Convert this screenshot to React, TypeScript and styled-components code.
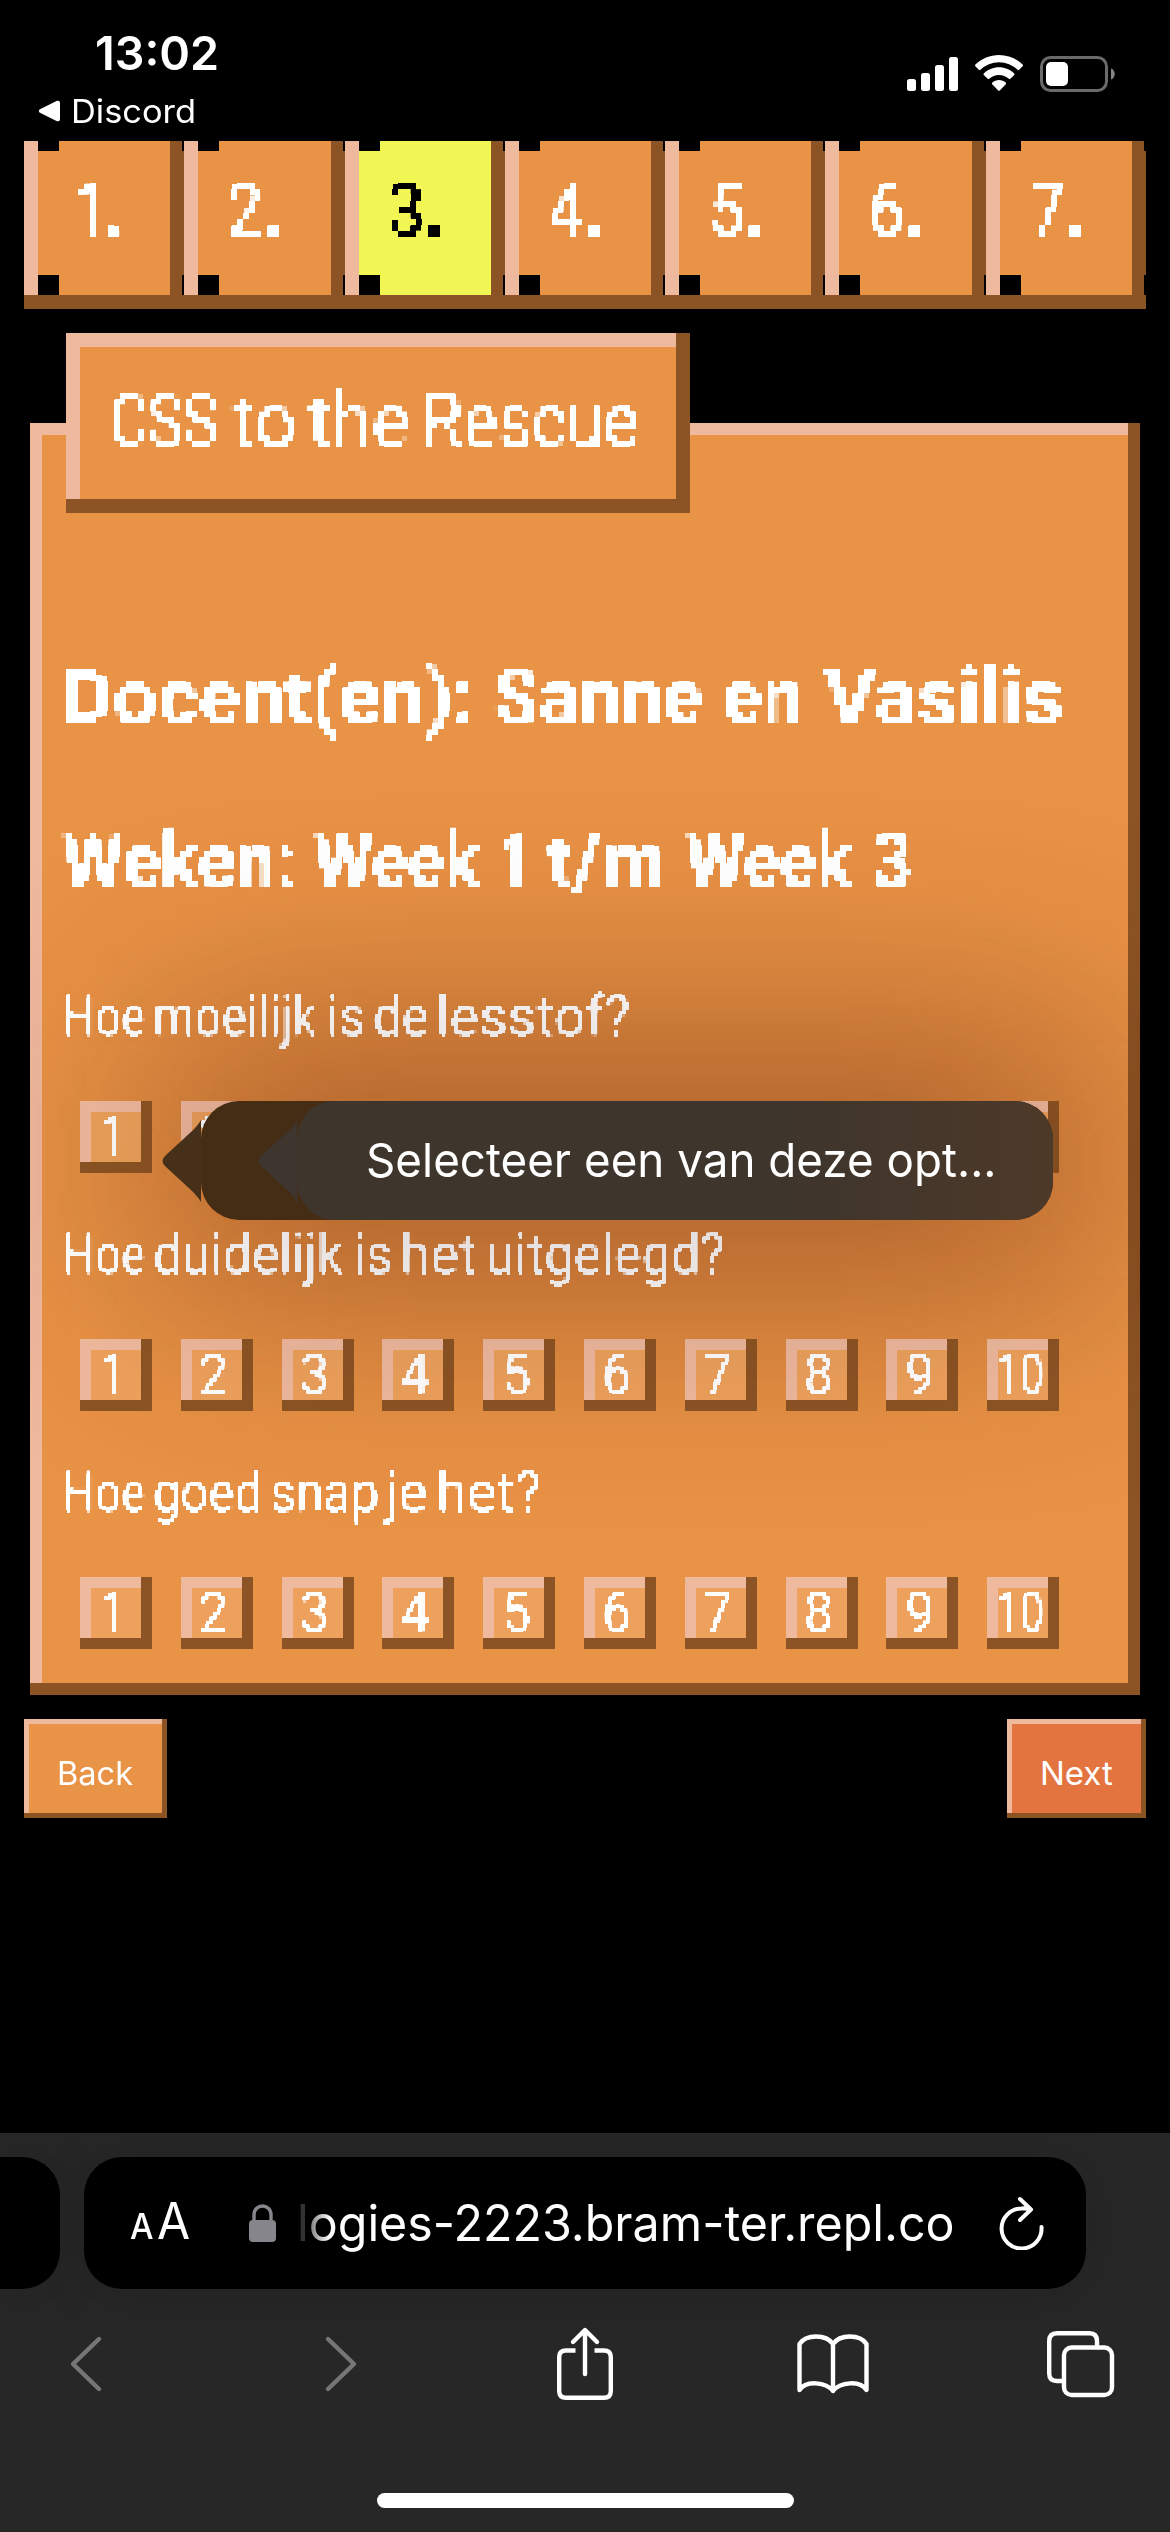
import React, { useLayoutEffect, useRef, useState } from 'react';
import styled, { createGlobalStyle, css } from 'styled-components';

const c = {
  base: '#e99346',
  light: '#efb99e',
  dark: '#8c5424',
  yellow: '#f2f654',
  hot: '#e37440',
};

const GlobalStyle = createGlobalStyle`
  * { box-sizing: border-box; }
  html, body { margin: 0; background: #000; }
  body { width: 1170px; height: 2532px; overflow: hidden; font-family: Inter, "Liberation Sans", sans-serif; color: #fff; }
  h1, h2, p { margin: 0; font-weight: inherit; font-size: inherit; }
  button { border: 0; color: inherit; font: inherit; padding: 0; }
`;

const bevel = (w: number) => css`
  box-shadow:
    inset -${w}px 0 ${c.dark},
    inset 0 -${w}px ${c.dark},
    inset ${w}px 0 ${c.light},
    inset 0 ${w}px ${c.light};
`;

const Page = styled.div`
  width: 1170px;
  height: 2532px;
  display: flex;
  flex-direction: column;
  background: #000;
  overflow: hidden;
`;

/* ---------- fitted text ---------- */

const Slot = styled.span<{ $w: number }>`
  display: inline-block;
  width: ${(p) => p.$w}px;
  white-space: pre;
`;

const Stretch = styled.span`
  display: inline-block;
  transform-origin: 0 50%;
`;

type FitProps = { text: string; width: number; pitch?: number; bleed?: number };

/* Scales a text to an exact width; bleed is the side bearing that hangs out on the left. */
function Fit({ text, width, pitch = width, bleed = 0 }: FitProps) {
  const ref = useRef<HTMLSpanElement>(null);
  const [scale, setScale] = useState(1);
  useLayoutEffect(() => {
    const measure = () => {
      if (ref.current) setScale((width + bleed) / ref.current.offsetWidth);
    };
    measure();
    document.fonts.ready.then(measure);
  }, [text, width, bleed]);
  return (
    <Slot $w={pitch}>
      <Stretch ref={ref} style={{ transform: `translateX(${-bleed}px) scaleX(${scale})` }}>{text}</Stretch>
      {pitch > width ? ' ' : ''}
    </Slot>
  );
}

type Word = [text: string, start: number, end: number];

function Words({ words, bleed = 4 }: { words: Word[]; bleed?: number }) {
  return (
    <>
      {words.map(([t, s, e], i) => (
        <Fit key={i} text={t} width={e - s + 1} bleed={bleed} pitch={i < words.length - 1 ? words[i + 1][1] - s : e - s} />
      ))}
    </>
  );
}

/* ---------- pixel lettering ---------- */

const pixelFont = css`
  font-family: Roboto, "Liberation Sans", sans-serif;
  white-space: nowrap;
`;

const Defs = styled.svg`
  position: absolute;
  width: 0;
  height: 0;
`;

function PixelFilter({ id, cell, dot, blur, slope = 12, cut = 5 }: { id: string; cell: number; dot: number; blur: number; slope?: number; cut?: number }) {
  const r = (cell - dot) / 2;
  return (
    <filter id={id} primitiveUnits="userSpaceOnUse" colorInterpolationFilters="sRGB">
      <feGaussianBlur in="SourceGraphic" stdDeviation={blur} result="soft" />
      <feFlood x={r} y={r} width={dot} height={dot} floodColor="#000" result="dot" />
      <feOffset in="dot" x={0} y={0} width={cell} height={cell} dx={0} dy={0} />
      <feTile result="grid" />
      <feComposite in="soft" in2="grid" operator="in" />
      <feMorphology operator="dilate" radius={r} />
      <feComponentTransfer>
        <feFuncA type="linear" slope={slope} intercept={-cut} />
      </feComponentTransfer>
    </filter>
  );
}

/* ---------- status bar ---------- */

const Status = styled.header`
  height: 141px;
  display: flex;
  justify-content: space-between;
  padding: 0 54px 0 38px;
`;

const StatusLeft = styled.div`
  display: flex;
  flex-direction: column;
  padding-top: 24px;
`;

const Clock = styled.div`
  margin-left: 57px;
  height: 57px;
  line-height: 57px;
  font-size: 47px;
  font-weight: 600;
`;

const BackApp = styled.div`
  display: flex;
  align-items: center;
  gap: 11px;
  height: 60px;
  line-height: 60px;
  font-size: 33px;
`;

const StatusIcons = styled.div`
  display: flex;
  gap: 17px;
  padding-top: 55px;
  height: 93px;
`;

/* ---------- tabs ---------- */

const Tabs = styled.nav`
  display: grid;
  grid-template-columns: repeat(7, minmax(0, 1fr));
  height: 168px;
  margin: 0 24px;
  border-bottom: 14px solid ${c.dark};
`;

const Tab = styled.div<{ $active?: boolean; $first?: boolean }>`
  height: 154px;
  padding: 12px 0 0 ${(p) => (p.$first ? 54 : 47)}px;
  line-height: 114px;
  font-size: 76px;
  color: ${(p) => (p.$active ? '#000' : '#fff')};
  background:
    linear-gradient(#000, #000) 14px 0 / 21px 10px no-repeat,
    linear-gradient(#000, #000) 14px 100% / 21px 20px no-repeat,
    linear-gradient(#000, #000) 100% 0 / 2px 10px no-repeat,
    linear-gradient(#000, #000) 100% 100% / 2px 20px no-repeat,
    linear-gradient(${c.light}, ${c.light}) 0 0 / 14px 100% no-repeat,
    linear-gradient(${c.dark}, ${c.dark}) 100% 0 / 14px 100% no-repeat,
    ${(p) => (p.$active ? c.yellow : c.base)};
  ${pixelFont}
`;

const TabLabel = styled.div`
  display: flex;
  height: 114px;
  filter: url(#pixel6);
`;

const Period = styled.b`
  margin-left: 1px;
`;

/* ---------- panel ---------- */

const Panel = styled.main`
  position: relative;
  isolation: isolate;
  margin: 114px 30px 0;
  height: 1272px;
  padding-left: 36px;
  background: ${c.base};
  ${bevel(12)}
`;

const Title = styled.h1`
  width: 624px;
  height: 180px;
  margin-top: -90px;
  padding: 42px 0 0 48px;
  background: ${c.base};
  ${bevel(14)}
`;

const TitleText = styled.div`
  height: 90px;
  line-height: 92px;
  font-size: 76px;
  ${pixelFont}
  filter: url(#pixel6thin);
`;

const Heading = styled.h2<{ $gap: number }>`
  margin-top: ${(p) => p.$gap}px;
  height: 90px;
  line-height: 92px;
  font-size: 76px;
  font-weight: 700;
  ${pixelFont}
  filter: url(#pixel6);
`;

const Questions = styled.div`
  display: flex;
  flex-direction: column;
  gap: 51px;
  margin-top: 81px;
`;

const Question = styled.section`
  display: flex;
  flex-direction: column;
  gap: 55px;
`;

const Prompt = styled.p`
  height: 60px;
  line-height: 60px;
  font-size: 58px;
  ${pixelFont}
  filter: url(#pixel4);
`;

const Ratings = styled.div`
  position: relative;
  display: flex;
  gap: 28.8px;
  margin-left: 14px;
`;

const Rating = styled.button`
  flex: none;
  width: 72px;
  height: 72px;
  padding-right: 4px;
  line-height: 66px;
  font-size: 57px;
  text-align: center;
  background: #eda15c;
  ${bevel(11)}
  ${pixelFont}
`;

const RatingLabel = styled.span`
  display: flex;
  justify-content: center;
  height: 66px;
  filter: url(#pixel4);
`;

/* ---------- validation bubble ---------- */

const GlowClip = styled.div<{ $front?: boolean }>`
  position: absolute;
  inset: 0;
  overflow: hidden;
  z-index: ${(p) => (p.$front ? 1 : -1)};
  pointer-events: none;
`;

const Glow = styled.div<{ $front?: boolean }>`
  position: absolute;
  left: 131px;
  top: 618px;
  width: 932px;
  height: 239px;
  filter: blur(115px);
  background: ${(p) => (p.$front ? 'rgba(50, 10, 0, 0.2)' : 'rgba(100, 25, 0, 0.28)')};
`;

const Bubble = styled.div`
  position: absolute;
  z-index: 2;
  left: 171px;
  top: 678px;
  width: 852px;
  height: 119px;
  border-radius: 38px;
  background: #452c14;
`;

const BubbleFace = styled.div`
  margin-left: 96px;
  height: 119px;
  padding-left: 69px;
  border-radius: 38px;
  line-height: 117px;
  font-size: 47px;
  background: linear-gradient(90deg, #3e352d 65%, #4d3928);
`;

const Arrow = styled.svg<{ $x: number }>`
  position: absolute;
  left: ${(p) => p.$x}px;
  top: 19px;
`;

const ArrowShape = ({ x, fill }: { x: number; fill: string }) => (
  <Arrow $x={x} width="40" height="82" viewBox="0 0 40 82">
    <path d="M39 0 V82 C36 77 33 74 29 70 L4 47 Q-3 41 4 35 L29 12 C33 8 36 5 39 0Z" fill={fill} />
  </Arrow>
);

/* ---------- footer buttons ---------- */

const Actions = styled.div`
  display: flex;
  justify-content: space-between;
  margin: 24px 24px 0;
`;

const Action = styled.button<{ $w: number; $hot?: boolean }>`
  width: ${(p) => p.$w}px;
  height: 99px;
  padding: 9px 0 0 33px;
  text-align: left;
  font-size: 33px;
  line-height: 90px;
  background: ${(p) => (p.$hot ? c.hot : c.base)};
  ${bevel(5)}
`;

/* ---------- browser chrome ---------- */

const Browser = styled.footer`
  margin-top: auto;
  height: 399px;
  background: #272727;
  display: flex;
  flex-direction: column;
  padding-top: 24px;
`;

const UrlRow = styled.div`
  display: flex;
  gap: 24px;
  height: 132px;
`;

const PrevTab = styled.div`
  width: 60px;
  background: #000;
  border-radius: 0 38px 38px 0;
  box-shadow: 0 4px 50px rgba(0, 0, 0, 0.15);
`;

const UrlBar = styled.div`
  width: 1002px;
  display: flex;
  align-items: center;
  padding-left: 46px;
  background: #000;
  border-radius: 38px;
  box-shadow: 0 4px 50px rgba(0, 0, 0, 0.15);
`;

const TextSize = styled.div`
  display: flex;
  align-items: baseline;
  gap: 3px;
  width: 119px;
  line-height: 132px;
  font-size: 51px;
`;

const SmallA = styled.span`
  font-size: 36px;
  font-weight: 500;
`;

const Url = styled.div`
  display: flex;
  width: 662px;
  margin: 0 45px 0 16px;
  padding-left: 5px;
  line-height: 132px;
  font-size: 50px;
  white-space: nowrap;
  mask-image: linear-gradient(90deg, rgba(0, 0, 0, 0.2) 14px, rgba(0, 0, 0, 0.55) 20px, #000 38px);
`;

const Tools = styled.div`
  display: grid;
  grid-template-columns: repeat(5, 248px);
  place-items: center;
  height: 80px;
  margin: 35px 0 0 -35px;
`;

const Tool = styled.svg<{ $dx?: number; $dim?: boolean }>`
  margin-left: ${(p) => (p.$dx ?? 0) * 2}px;
  fill: none;
  stroke: ${(p) => (p.$dim ? '#767676' : '#fff')};
  stroke-width: 4.4;
  stroke-linecap: round;
  stroke-linejoin: round;
`;

const HomeIndicator = styled.div`
  width: 417px;
  height: 15px;
  border-radius: 8px;
  background: #fff;
  margin: 89px 0 0 377px;
`;

const QUESTIONS: Word[][] = [
  [['Hoe', 66, 144], ['moeilijk', 156, 315], ['is', 330, 364], ['de', 376, 427], ['lesstof?', 439, 630]],
  [['Hoe', 66, 144], ['duidelijk', 156, 342], ['is', 357, 391], ['het', 403, 476], ['uitgelegd?', 489, 724]],
  [['Hoe', 66, 144], ['goed', 156, 261], ['snap', 273, 378], ['je', 388, 427], ['het?', 439, 540]],
];

const NUMBERS = [1, 2, 3, 4, 5, 6, 7, 8, 9, 10];

export default function App() {
  return (
    <Page>
      <GlobalStyle />
      <Defs aria-hidden="true">
        <PixelFilter id="pixel6" cell={6} dot={2} blur={1.1} />
        <PixelFilter id="pixel6thin" cell={6} dot={2} blur={1.4} cut={5.6} />
        <PixelFilter id="pixel4" cell={4} dot={2} blur={0.9} cut={6.2} />
      </Defs>

      <Status>
        <StatusLeft>
          <Clock><Fit text="13:02" width={124} /></Clock>
          <BackApp>
            <svg width="22" height="22" viewBox="0 0 22 22"><path d="M1.5 9.5 19 .8Q22 0 22 3V19Q22 22 19 21.200L1.500 12.500Q0 11 1.500 9.500Z" fill="#fff" /></svg>
            <Fit text="Discord" width={125} />
          </BackApp>
        </StatusLeft>
        <StatusIcons>
          <svg width="51" height="36" viewBox="0 0 51 36" fill="#fff">
            <rect x="0" y="24" width="9" height="12" rx="2.500" />
            <rect x="14" y="18" width="9" height="18" rx="2.500" />
            <rect x="28" y="10" width="9" height="26" rx="2.500" />
            <rect x="42" y="2" width="9" height="34" rx="2.500" />
          </svg>
          <svg width="48" height="36" viewBox="0 0 48 36" fill="#fff">
            <path d="M24 0C33 0 41.500 3.600 47.600 9.600Q48.400 10.400 47.600 11.200L44.200 14.800Q43.400 15.500 42.600 14.800A26.500 26.500 0 0 0 5.400 14.800Q4.600 15.500 3.800 14.800L.4 11.200Q-.4 10.400 .4 9.600C6.500 3.600 15 0 24 0Z" />
            <path d="M24 12.300C29.800 12.300 35.200 14.600 39.200 18.400Q40 19.200 39.200 20L35.400 23.800Q34.600 24.500 33.800 23.800A14.500 14.500 0 0 0 14.200 23.800Q13.400 24.500 12.600 23.800L8.800 20Q8 19.200 8.800 18.400C12.800 14.600 18.200 12.300 24 12.300Z" />
            <path d="M24 25C26.600 25 29 26 30.700 27.600Q31.400 28.400 30.700 29.200L24.800 35.400Q24 36 23.200 35.400L17.300 29.200Q16.600 28.400 17.300 27.600C19 26 21.400 25 24 25Z" />
          </svg>
          <svg width="76" height="38" viewBox="0 0 76 38">
            <rect x="1.500" y="2.500" width="65" height="33" rx="9" fill="none" stroke="#6a6a6a" strokeWidth="3" />
            <rect x="6" y="7" width="22" height="24" rx="5" fill="#fff" />
            <path d="M71 13.500C76 15 76 23 71 24.500Z" fill="#858585" />
          </svg>
        </StatusIcons>
      </Status>

      <Tabs>
        {NUMBERS.slice(0, 7).map((n) => (
          <Tab key={n} $active={n === 3} $first={n === 1}>
            <TabLabel><Fit text={String(n)} width={n === 1 ? 30 : 32} pitch={n === 1 ? 22 : 31} bleed={3} /><Period>.</Period></TabLabel>
          </Tab>
        ))}
      </Tabs>

      <Panel>
        <GlowClip><Glow /></GlowClip>
        <Title>
          <TitleText>
            <Words words={[['CSS', 114, 217], ['to', 235, 295], ['the', 312, 409], ['Rescue', 426, 637]]} />
          </TitleText>
        </Title>
        <Heading $gap={138}>
          <Words words={[['Docent(en):', 66, 474], ['Sanne', 497, 702], ['en', 726, 803], ['Vasilis', 828, 1062]]} />
        </Heading>
        <Heading $gap={74}>
          <Words words={[['Weken:', 66, 294], ['Week', 318, 479], ['1', 501, 531], ['t/m', 552, 665], ['Week', 690, 851], ['3', 875, 912]]} />
        </Heading>
        <Questions>
          {QUESTIONS.map((words, i) => (
            <Question key={i}>
              <Prompt><Words words={words} bleed={3} /></Prompt>
              <Ratings>
                {NUMBERS.map((n) => (
                  <Rating key={n}>
                    <RatingLabel><Fit text={String(n)} width={n === 10 ? 46 : 27} bleed={2} /></RatingLabel>
                  </Rating>
                ))}
              </Ratings>
            </Question>
          ))}
        </Questions>
        <GlowClip $front><Glow $front /></GlowClip>
        <Bubble>
          <ArrowShape x={-39} fill="#47301a" />
          <ArrowShape x={57} fill="#3d352e" />
          <BubbleFace><Fit text="Selecteer een van deze opt..." width={631} /></BubbleFace>
        </Bubble>
      </Panel>

      <Actions>
        <Action $w={143}><Fit text="Back" width={76} /></Action>
        <Action $w={139} $hot><Fit text="Next" width={73} /></Action>
      </Actions>

      <Browser>
        <UrlRow>
          <PrevTab />
          <UrlBar>
            <TextSize>
              <SmallA><Fit text="A" width={24} /></SmallA>
              <Fit text="A" width={33} />
            </TextSize>
            <svg width="27" height="38" viewBox="0 0 27 38">
              <rect x="0" y="16" width="27" height="22" rx="4" fill="#86858b" />
              <path d="M5 17V11C5 -1 22 -1 22 11V17" fill="none" stroke="#86858b" strokeWidth="3.400" />
            </svg>
            <Url><Fit text="logies-2223.bram-ter.repl.co" width={658} /></Url>
            <svg width="46" height="54" viewBox="0 0 46 54" fill="none" stroke="#fff" strokeWidth="4" strokeLinecap="round" strokeLinejoin="round">
              <path d="M42.500 31A20 20 0 1 1 22.500 12.500Q27 12 32 13.500M21 3 32 13.500 21 24" />
            </svg>
          </UrlBar>
        </UrlRow>
        <Tools>
          <Tool $dx={-3} $dim width="36" height="58" viewBox="0 0 36 58"><path d="M31 4 5 29 31 54" /></Tool>
          <Tool $dx={4} $dim width="36" height="58" viewBox="0 0 36 58"><path d="M5 4 31 29 5 54" /></Tool>
          <Tool width="58" height="76" viewBox="0 0 58 76">
            <path d="M29 5V48M17 16 29 4 41 16" />
            <path d="M19.500 24.500H10Q3.200 24.500 3.200 31V65Q3.200 71.800 10 71.800H48Q54.800 71.800 54.800 65V31Q54.800 24.500 48 24.500H38.500" strokeLinecap="butt" />
          </Tool>
          <Tool width="74" height="62" viewBox="0 0 74 62">
            <path d="M37 11C30 1 10 1 3.500 11V57C10 47 30 49 37 58C44 49 64 47 70.500 57V11C64 1 44 1 37 11ZM37 11V58" />
          </Tool>
          <Tool $dx={-1} width="69" height="68" viewBox="0 0 69 68">
            <path d="M17.500 51H11Q3.200 51 3.200 43.500V11Q3.200 3.200 11 3.200H43.500Q51 3.200 51 11V17" />
            <rect x="18" y="17.500" width="48" height="47.500" rx="7.500" />
          </Tool>
        </Tools>
        <HomeIndicator />
      </Browser>
    </Page>
  );
}
